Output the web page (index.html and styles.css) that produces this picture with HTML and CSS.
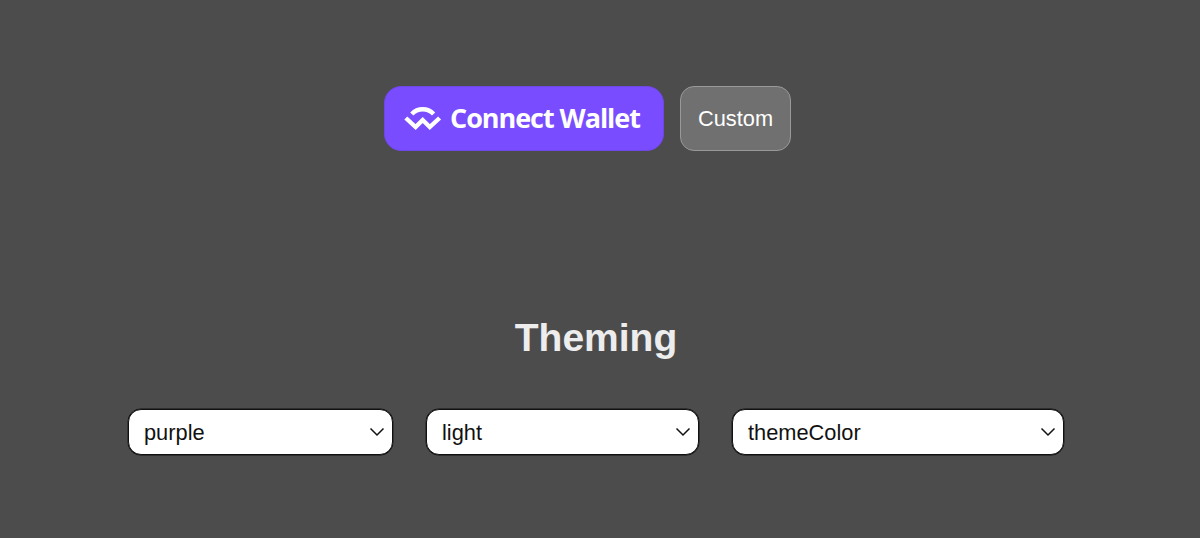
FILE: index.html
```html
<!DOCTYPE html>
<html lang="en">
<head>
    <meta charset="UTF-8">
    <meta name="viewport" content="width=device-width, initial-scale=1.0">
    <title>Connect Wallet</title>
    <link rel="stylesheet" href="styles.css">
</head>
<body>
    <div class="container">
        <div class="buttons">
            <button class="connect-btn">
                <svg class="logo" width="38" height="26" viewBox="0 0 38 26" fill="none" stroke="#fff" stroke-width="4.4">
                    <path d="M7.8 9C13.8 2.6 23.6 2.6 29.6 9"/>
                    <path d="M1.8 13L11.6 22L18.7 15L25.8 22L35.6 13"/>
                </svg>
                <span>Connect Wallet</span>
            </button>
            <button class="custom-btn">Custom</button>
        </div>

        <h1>Theming</h1>

        <div class="theming">
            <div class="select color-select">
                <select>
                    <option>purple</option>
                </select>
                <svg class="arrow" width="16" height="10" viewBox="0 0 16 10"><path d="M1.5 1.5L8 8L14.5 1.5"/></svg>
            </div>
            <div class="select mode-select">
                <select>
                    <option>light</option>
                </select>
                <svg class="arrow" width="16" height="10" viewBox="0 0 16 10"><path d="M1.5 1.5L8 8L14.5 1.5"/></svg>
            </div>
            <div class="select background-select">
                <select>
                    <option>themeColor</option>
                </select>
                <svg class="arrow" width="16" height="10" viewBox="0 0 16 10"><path d="M1.5 1.5L8 8L14.5 1.5"/></svg>
            </div>
        </div>
    </div>
</body>
</html>
```
FILE: styles.css
```css
* {
    box-sizing: border-box;
}
body {
    margin: 0;
    background-color: #4c4c4c;
    font-family: "Liberation Sans", Arial, sans-serif;
}
.container {
    width: 1192px;
    height: 538px;
    padding-top: 86px;
}
.buttons {
    display: flex;
    justify-content: center;
    gap: 16px;
    padding-right: 17px;
}
button {
    height: 65px;
    padding: 0;
    color: white;
}
.connect-btn {
    display: flex;
    align-items: center;
    width: 280px;
    padding: 0 0 2px 19px;
    background-color: #794cff;
    border: 1px solid #6f48e3;
    border-radius: 17px;
    font-family: "Open Sans", "Noto Sans", sans-serif;
    font-size: 27px;
    font-weight: 700;
    letter-spacing: -1.05px;
    white-space: nowrap;
}
.logo {
    flex: none;
    margin-right: 8px;
}
.custom-btn {
    width: 111px;
    background-color: #707070;
    border: 1px solid #999;
    border-radius: 14px;
    font-family: inherit;
    font-size: 21.8px;
}
h1 {
    margin: 164px 0 0;
    color: #ededed;
    font-size: 39px;
    line-height: 46px;
    text-align: center;
}
.theming {
    display: flex;
    justify-content: center;
    gap: 33px;
    margin-top: 48px;
}
.select {
    position: relative;
    height: 46px;
}
.select select {
    appearance: none;
    width: 100%;
    height: 100%;
    padding: 0 15px;
    color: #111;
    background-color: white;
    border: 1px solid #111;
    border-radius: 13px;
    box-shadow: 0 0 0 0.4px #111;
    font-family: inherit;
    font-size: 21.8px;
}
.color-select {
    width: 265px;
}
.mode-select {
    width: 273px;
}
.background-select {
    width: 332px;
}
.arrow {
    position: absolute;
    top: 18px;
    right: 8px;
    pointer-events: none;
    fill: none;
    stroke: #111;
    stroke-width: 1.5;
}
```
